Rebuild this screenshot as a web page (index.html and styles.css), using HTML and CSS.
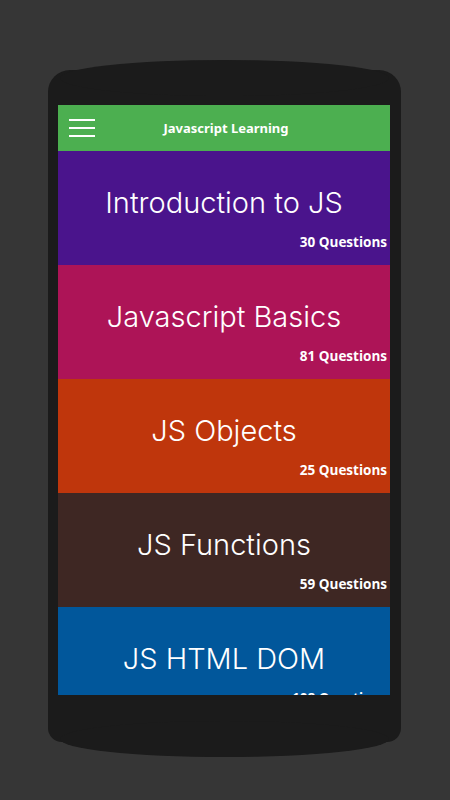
FILE: index.html
```html
<!DOCTYPE html>
<html>
<head>
<meta charset="utf-8">
<link rel="stylesheet" href="styles.css">
</head>
<body>
<div class="phone">
  <div class="screen">
    <header class="appbar">
      <div class="menu">
        <span></span><span></span><span></span>
      </div>
      <div class="apptitle">Javascript Learning</div>
    </header>
    <div class="list">
      <div class="card c1">
        <div class="title">Introduction to JS</div>
        <div class="count">30 Questions</div>
      </div>
      <div class="card c2">
        <div class="title">Javascript Basics</div>
        <div class="count">81 Questions</div>
      </div>
      <div class="card c3">
        <div class="title">JS Objects</div>
        <div class="count">25 Questions</div>
      </div>
      <div class="card c4">
        <div class="title">JS Functions</div>
        <div class="count">59 Questions</div>
      </div>
      <div class="card c5">
        <div class="title">JS HTML DOM</div>
        <div class="count">108 Questions</div>
      </div>
    </div>
  </div>
</div>
</body>
</html>
```

FILE: styles.css
```css
html, body {
  margin: 0;
  padding: 0;
}
body {
  background: #363636;
  width: 450px;
  height: 800px;
  overflow: hidden;
  padding-top: 70px;
  box-sizing: border-box;
}
.phone {
  position: relative;
  margin-left: 48px;
  width: 353px;
  height: 672px;
  background: #1b1b1b;
  border-radius: 22px 22px 14px 14px;
  padding: 35px 11px 47px 10px;
  box-sizing: border-box;
}
.phone::before,
.phone::after {
  content: "";
  position: absolute;
  left: 12px;
  right: 12px;
  height: 36px;
  background: #1b1b1b;
  border-radius: 50%;
}
.phone::before {
  top: -10px;
}
.phone::after {
  bottom: -15px;
}
.screen {
  position: relative;
  z-index: 1;
  width: 332px;
  height: 590px;
  overflow: hidden;
  background: #fff;
  display: flex;
  flex-direction: column;
}
.appbar {
  flex: 0 0 46px;
  height: 46px;
  background: #4caf50;
  display: flex;
  align-items: center;
  position: relative;
}
.menu {
  margin-left: 11px;
  width: 26px;
  display: flex;
  flex-direction: column;
  gap: 6px;
}
.menu span {
  display: block;
  height: 2px;
  background: #fff;
}
.apptitle {
  position: absolute;
  left: 0;
  right: 0;
  text-align: center;
  font-family: "Noto Sans", sans-serif;
  font-weight: bold;
  font-size: 13px;
  color: #fff;
  padding-left: 4px;
}
.list {
  display: flex;
  flex-direction: column;
}
.card {
  flex: 0 0 114px;
  height: 114px;
  box-sizing: border-box;
  padding-top: 29px;
  display: flex;
  flex-direction: column;
  color: #fff;
}
.title {
  text-align: center;
  font-family: "Inter", sans-serif;
  font-size: 29px;
  line-height: 45px;
  font-weight: 300;
}
.count {
  align-self: flex-end;
  margin-top: 7px;
  padding-right: 3px;
  font-family: "Open Sans", sans-serif;
  font-weight: bold;
  font-size: 13.5px;
  line-height: 20px;
}
.c1 { background: #4a148c; }
.c2 { background: #ad1457; }
.c3 { background: #bf360c; }
.c4 { background: #3e2723; }
.c5 { background: #01579b; }
```
